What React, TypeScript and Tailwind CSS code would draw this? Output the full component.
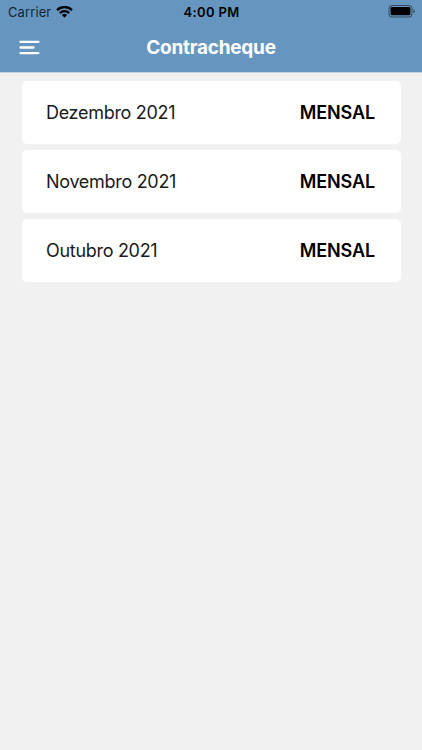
const payslips = [
  { month: "Dezembro 2021", type: "MENSAL" },
  { month: "Novembro 2021", type: "MENSAL" },
  { month: "Outubro 2021", type: "MENSAL" },
];

function StatusBar() {
  return (
    <div className="grid h-6 grid-cols-3 items-center pl-2 pr-[7px] text-black">
      <div className="flex items-center gap-[5px]">
        <span className="pt-px text-[13px] tracking-[0.1px] text-black/80">Carrier</span>
        <svg width="17" height="12" viewBox="0 0 17 12" fill="none" stroke="currentColor" strokeWidth="2.3">
          <path d="M1 4.1a10.6 10.6 0 0 1 15 0" />
          <path d="M3.8 7.1a6.6 6.6 0 0 1 9.4 0" />
          <path d="M8.5 11.7 5.9 9.100a3.700 3.700 0 0 1 5.200 0Z" fill="currentColor" stroke="none" />
        </svg>
      </div>
      <span className="pt-px text-center text-[13px] font-semibold tracking-[0.35px]">4:00 PM</span>
      <svg className="mb-px justify-self-end" width="27" height="13" viewBox="0 0 27 13" fill="none">
        <rect x="1" y="0.5" width="23" height="11.5" rx="3" stroke="black" strokeOpacity="0.5" />
        <rect x="2.6" y="2" width="19.8" height="8.3" rx="1.3" fill="black" />
        <path d="M25.300 4.300v4c.9-.3 1.400-1.100 1.400-2s-.5-1.700-1.400-2Z" fill="black" fillOpacity="0.5" />
      </svg>
    </div>
  );
}

export default function App() {
  return (
    <div className="min-h-screen bg-[#f1f1f1] font-[Inter,sans-serif]">
      <header className="h-[73px] border-b border-[#c5d3e1] bg-[#6696c0]">
        <StatusBar />
        <div className="grid h-12 grid-cols-[1fr_auto_1fr] items-center">
          <button className="ml-[19px] w-[22px] text-white" aria-label="Menu">
            <svg width="22" height="16" viewBox="0 0 22 16" stroke="currentColor" strokeWidth="2.3" strokeLinecap="round">
              <path d="M1.500 1.900h17.900M1.500 7.500h13M1.500 13.100h17.900" />
            </svg>
          </button>
          <h1 className="pt-px text-[19px] font-bold tracking-[-0.25px] text-white">Contracheque</h1>
        </div>
      </header>

      <main className="flex flex-col gap-[6.6px] pt-[8.4px] pr-[21px] pl-[22px]">
        {payslips.map((item) => (
          <div key={item.month} className="flex h-[62.4px] items-center justify-between rounded-[5px] bg-white pr-[26px] pl-[25px] pt-px text-lg text-black">
            <span className="-ml-px tracking-[-0.3px] text-[#1a1a1a]">{item.month}</span>
            <span className="font-semibold tracking-[-0.1px]">{item.type}</span>
          </div>
        ))}
      </main>
    </div>
  );
}
